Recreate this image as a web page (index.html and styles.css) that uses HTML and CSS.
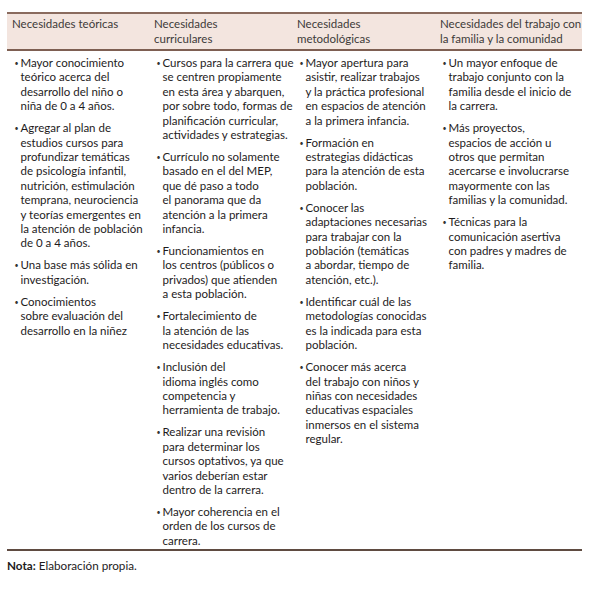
FILE: index.html
```html
<!DOCTYPE html>
<html lang="es">
<head>
<meta charset="utf-8">
<title>Necesidades</title>
<link rel="stylesheet" href="styles.css">
</head>
<body>
<div class="table">
  <div class="head">
    <div class="th">Necesidades teóricas</div>
    <div class="th">Necesidades<br>curriculares</div>
    <div class="th">Necesidades<br>metodológicas</div>
    <div class="th">Necesidades del trabajo con<br>la familia y la comunidad</div>
  </div>
  <div class="body">
    <ul class="col">
      <li><span class="b">•</span><span class="t">Mayor conocimiento<br>teórico acerca del<br>desarrollo del niño o<br>niña de 0 a 4 años.</span></li>
      <li><span class="b">•</span><span class="t">Agregar al plan de<br>estudios cursos para<br>profundizar temáticas<br>de psicología infantil,<br>nutrición, estimulación<br>temprana, neurociencia<br>y teorías emergentes en<br>la atención de población<br>de 0 a 4 años.</span></li>
      <li><span class="b">•</span><span class="t">Una base más sólida en<br>investigación.</span></li>
      <li><span class="b">•</span><span class="t">Conocimientos<br>sobre evaluación del<br>desarrollo en la niñez</span></li>
    </ul>
    <ul class="col">
      <li><span class="b">•</span><span class="t">Cursos para la carrera que<br>se centren propiamente<br>en esta área y abarquen,<br>por sobre todo, formas de<br>planificación curricular,<br>actividades y estrategias.</span></li>
      <li><span class="b">•</span><span class="t">Currículo no solamente<br>basado en el del MEP,<br>que dé paso a todo<br>el panorama que da<br>atención a la primera<br>infancia.</span></li>
      <li><span class="b">•</span><span class="t">Funcionamientos en<br>los centros (públicos o<br>privados) que atienden<br>a esta población.</span></li>
      <li><span class="b">•</span><span class="t">Fortalecimiento de<br>la atención de las<br>necesidades educativas.</span></li>
      <li><span class="b">•</span><span class="t">Inclusión del<br>idioma inglés como<br>competencia y<br>herramienta de trabajo.</span></li>
      <li><span class="b">•</span><span class="t">Realizar una revisión<br>para determinar los<br>cursos optativos, ya que<br>varios deberían estar<br>dentro de la carrera.</span></li>
      <li><span class="b">•</span><span class="t">Mayor coherencia en el<br>orden de los cursos de<br>carrera.</span></li>
    </ul>
    <ul class="col">
      <li><span class="b">•</span><span class="t">Mayor apertura para<br>asistir, realizar trabajos<br>y la práctica profesional<br>en espacios de atención<br>a la primera infancia.</span></li>
      <li><span class="b">•</span><span class="t">Formación en<br>estrategias didácticas<br>para la atención de esta<br>población.</span></li>
      <li><span class="b">•</span><span class="t">Conocer las<br>adaptaciones necesarias<br>para trabajar con la<br>población (temáticas<br>a abordar, tiempo de<br>atención, etc.).</span></li>
      <li><span class="b">•</span><span class="t">Identificar cuál de las<br>metodologías conocidas<br>es la indicada para esta<br>población.</span></li>
      <li><span class="b">•</span><span class="t">Conocer más acerca<br>del trabajo con niños y<br>niñas con necesidades<br>educativas espaciales<br>inmersos en el sistema<br>regular.</span></li>
    </ul>
    <ul class="col">
      <li><span class="b">•</span><span class="t">Un mayor enfoque de<br>trabajo conjunto con la<br>familia desde el inicio de<br>la carrera.</span></li>
      <li><span class="b">•</span><span class="t">Más proyectos,<br>espacios de acción u<br>otros que permitan<br>acercarse e involucrarse<br>mayormente con las<br>familias y la comunidad.</span></li>
      <li><span class="b">•</span><span class="t">Técnicas para la<br>comunicación asertiva<br>con padres y madres de<br>familia.</span></li>
    </ul>
  </div>
</div>
<p class="note"><b>Nota:</b> Elaboración propia.</p>
</body>
</html>
```

FILE: styles.css
```css
html, body {
  margin: 0;
  padding: 0;
  background: #ffffff;
}
body {
  font-family: Lato, "Liberation Sans", sans-serif;
  font-size: 11.5px;
  color: #1e1b1c;
}
.table {
  width: 575px;
  margin: 12px 0 0 7px;
  border-top: 2px solid #8a6b5e;
  border-bottom: 2px solid #5f4b41;
}
.head,
.body {
  display: grid;
  grid-template-columns: 142px 143px 143px 147px;
}
.head {
  background: #f3e5df;
  border-bottom: 2px solid #7e5f52;
  padding: 3px 0 3px;
  min-height: 29px;
}
.th {
  padding-left: 5px;
  font-size: 11.5px;
  line-height: 14.5px;
  color: #3d3a39;
  white-space: nowrap;
}
.body {
  padding: 5px 0 1px;
}
.col {
  list-style: none;
  margin: 0;
  padding: 0 0 0 5px;
}
.col li {
  display: flex;
  line-height: 14.4px;
  margin-bottom: 7.6px;
  white-space: nowrap;
}
.col li:last-child {
  margin-bottom: 0;
}
.b {
  flex: none;
  width: 8.5px;
  padding-left: 2.5px;
  box-sizing: border-box;
  font-size: 7px;
  color: #333;
}
.note {
  margin: 7px 0 0 7px;
  font-size: 11.7px;
  line-height: 14px;
  color: #1e1b1c;
}
.note b {
  font-weight: 700;
}
```
